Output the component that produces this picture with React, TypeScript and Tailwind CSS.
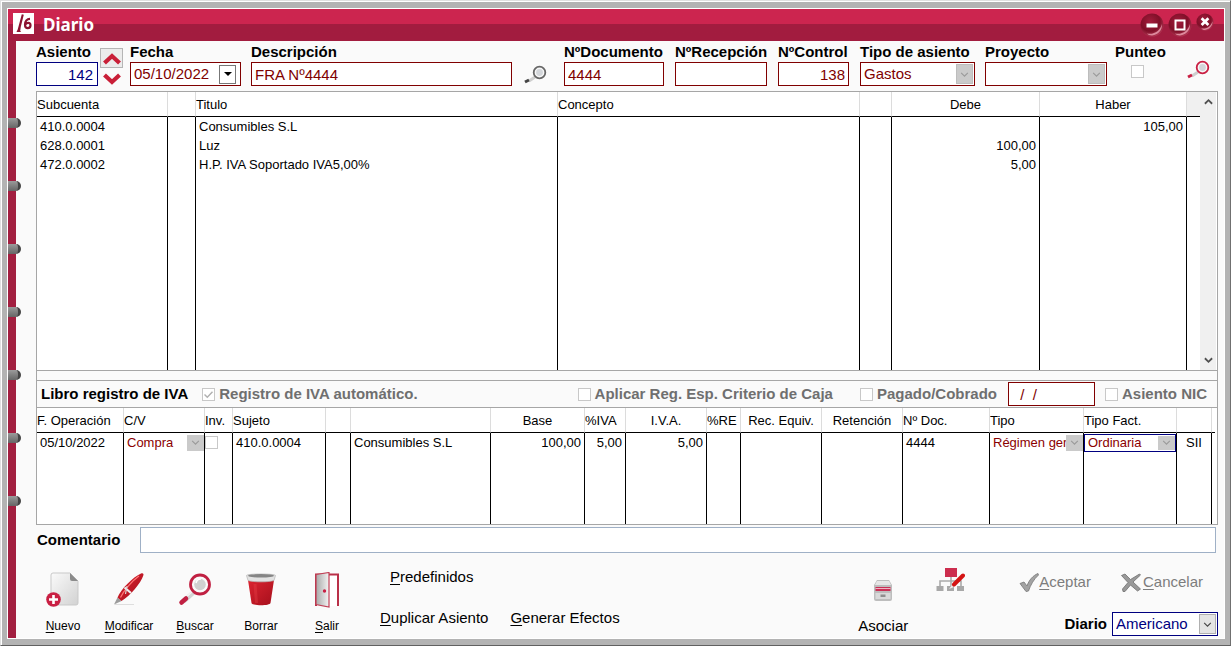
import type { ReactNode } from "react";

const boxBase = "h-6 border border-[#800000] bg-white px-[3px] text-[15px] leading-5 text-[#800000] outline-none";

function Chevron({ className }: { className: string }) {
  return (
    <svg viewBox="0 0 10 6" className={className} fill="none" stroke="currentColor" strokeWidth="1.3" aria-hidden="true">
      <path d="M1 1l4 4 4-4" />
    </svg>
  );
}

function Field({ id, label, className, children }: { id: string; label: string; className: string; children: ReactNode }) {
  return (
    <div className={`flex flex-col ${className}`}>
      <label htmlFor={id} className="h-5 text-[15px] leading-5 font-bold whitespace-nowrap">{label}</label>
      {children}
    </div>
  );
}

function GreySelect({ id, value, label }: { id: string; value: string; label?: string }) {
  return (
    <div className="relative">
      <select id={id} aria-label={label} disabled defaultValue={value} className={`${boxBase} w-full appearance-none opacity-100`}>
        <option value={value}>{value}</option>
      </select>
      <span className="pointer-events-none absolute top-[2px] right-[2px] flex h-5 w-[17px] items-center justify-center border border-[#bdbdbd] bg-[#cacaca] text-[#9a9a9a]">
        <Chevron className="h-[5px] w-[9px]" />
      </span>
    </div>
  );
}

function CellSelect({ label, value, focused }: { label: string; value: string; focused?: boolean }) {
  return (
    <div className={focused ? "relative flex h-[18px] border border-[#000080] bg-white" : "relative flex h-[18px] bg-white"}>
      <select aria-label={label} disabled defaultValue={value} className="w-full appearance-none overflow-hidden bg-transparent pr-4 pl-[3px] text-[13px] leading-4 text-[#8b0000] opacity-100">
        <option value={value}>{value}</option>
      </select>
      <span className="pointer-events-none absolute inset-y-px right-0 flex w-[17px] items-center justify-center bg-[#cacaca] text-[#9a9a9a]">
        <Chevron className="h-[5px] w-[9px]" />
      </span>
    </div>
  );
}

function Check({ id, label, checked }: { id: string; label: string; checked?: boolean }) {
  return (
    <div className="relative flex items-center gap-1">
      <input id={id} type="checkbox" disabled defaultChecked={checked} className="size-[13px] shrink-0 appearance-none border border-[#c8c8c8] bg-white" />
      {checked && (
        <svg viewBox="0 0 13 13" className="pointer-events-none absolute left-0 size-[13px]" fill="none" stroke="#b0b0b0" strokeWidth="1.4" aria-hidden="true">
          <path d="M2.5 6.5l2.8 2.8L10.5 3.8" />
        </svg>
      )}
      <label htmlFor={id} className="text-[15px] leading-5 font-bold whitespace-nowrap text-[#6f6f6f]">{label}</label>
    </div>
  );
}

function Magnifier({ ring, handle, className }: { ring: string; handle: string; className: string }) {
  return (
    <svg viewBox="0 0 34 34" className={className} aria-hidden="true">
      <path d="M16 19l-10 9" stroke="#d4d4d4" strokeWidth="4.5" />
      <path d="M15 18l-8 7" stroke="#f4f4f4" strokeWidth="1.5" />
      <path d="M8 25.500l-4.500 4" stroke={handle} strokeWidth="4.500" strokeLinecap="round" />
      <circle cx="22" cy="11.500" r="9.500" fill="#fafafa" stroke={ring} strokeWidth="2.800" />
      <circle cx="22" cy="11.500" r="5.800" fill="#d0d0d0" />
      <path d="M18 10a5 5 0 0 1 5-4" stroke="#fff" strokeWidth="1.600" fill="none" />
    </svg>
  );
}

function SmallMagnifier({ ring, handle, className }: { ring: string; handle: string; className: string }) {
  return (
    <svg viewBox="0 0 24 20" className={className} aria-hidden="true">
      <path d="M11 12l-6 4" stroke="#cfcfcf" strokeWidth="3" />
      <path d="M5 15l-4 2" stroke={handle} strokeWidth="3" />
      <circle cx="15.500" cy="7.500" r="5.800" fill="#f7f7f7" stroke={ring} strokeWidth="1.800" />
      <circle cx="15.500" cy="7.500" r="3.400" fill="#d3d6da" />
    </svg>
  );
}

function Logo() {
  return (
    <svg viewBox="0 0 21 21" className="size-[21px]" aria-hidden="true">
      <path d="M0 0h21v21H0z" fill="#fff" />
      <path d="M8.800 1.200l2 .5-3 12L7.200 18l1 1H3.500l1.200-2.500z" fill="#8c1230" />
      <path d="M17 5.800c-3 0-5 2.500-5 5.800 0 2 1 3.600 2.700 3.600 1.600 0 2.800-1.200 2.800-2.900 0-1.500-1-2.500-2.300-2.500-1.200 0-2.300.7-2.800 1.800" fill="none" stroke="#8c1230" strokeWidth="2.200" />
    </svg>
  );
}

function WindowButton({ label, size, children }: { label: string; size: string; children: ReactNode }) {
  return (
    <button type="button" aria-label={label} className={size}>
      <svg viewBox="0 0 24 24" className="size-full" aria-hidden="true">
        <circle cx="12" cy="12" r="11.500" fill="url(#knob)" />
        <path d="M22 11c.5 6-4 11-10 11.500-2.500 0-4-.8-5-2 7 1.500 13-2.500 15-9.500z" fill="#f3a9bb" opacity=".75" />
        {children}
      </svg>
    </button>
  );
}

const entryHeads = [
  { t: "Subcuenta", w: "w-[131px] text-left" },
  { t: "", w: "w-[28px]" },
  { t: "Titulo", w: "text-left" },
  { t: "Concepto", w: "w-[302px] text-left" },
  { t: "", w: "w-[32px]" },
  { t: "Debe", w: "w-[148px] text-center" },
  { t: "Haber", w: "w-[147px] text-center" },
];
const entries = [
  ["410.0.0004", "", "Consumibles S.L", "", "", "", "105,00"],
  ["628.0.0001", "", "Luz", "", "", "100,00", ""],
  ["472.0.0002", "", "H.P. IVA Soportado IVA5,00%", "", "", "5,00", ""],
];

const vatHeads = [
  { t: "F. Operación", w: "w-[87px] text-left" },
  { t: "C/V", w: "w-[81px] text-left" },
  { t: "Inv.", w: "w-[28px] text-left" },
  { t: "Sujeto", w: "w-[93px] text-left" },
  { t: "", w: "w-[25px]" },
  { t: "", w: "" },
  { t: "Base", w: "w-[94px] text-center" },
  { t: "%IVA", w: "w-[41px] text-left" },
  { t: "I.V.A.", w: "w-[81px] text-center" },
  { t: "%RE", w: "w-[34px] text-left" },
  { t: "Rec. Equiv.", w: "w-[81px] text-center" },
  { t: "Retención", w: "w-[81px] text-center" },
  { t: "Nº Doc.", w: "w-[87px] text-left" },
  { t: "Tipo", w: "w-[94px] text-left" },
  { t: "Tipo Fact.", w: "w-[93px] text-left" },
  { t: "", w: "w-[35px]" },
];

const th = "h-[25px] overflow-hidden border-r border-b border-r-[#dcdcdc] border-b-black p-0 font-normal whitespace-nowrap";
const td = "border-r border-black px-[3px] py-0 whitespace-nowrap";

function ToolButton({ first, rest, underline = true, children }: { first: string; rest: string; underline?: boolean; children: ReactNode }) {
  return (
    <button type="button" className="flex w-[54px] flex-col items-center gap-2">
      {children}
      <span className="text-[12px] leading-5">
        <span className={underline ? "underline underline-offset-2" : ""}>{first}</span>{rest}
      </span>
    </button>
  );
}

function NewIcon() {
  return (
    <svg viewBox="0 0 34 36" className="h-9 w-[34px]" aria-hidden="true">
      <path d="M7 1h17l8 8v22a2 2 0 0 1-2 2H7a2 2 0 0 1-2-2V3a2 2 0 0 1 2-2z" fill="url(#paper)" stroke="#c9c9c9" />
      <path d="M24 1l8 8h-6a2 2 0 0 1-2-2z" fill="#8b8b8b" />
      <circle cx="7.500" cy="27.500" r="7.300" fill="#c91f43" />
      <path d="M7.500 23v9M3 27.500h9" stroke="#fff" strokeWidth="2.600" />
    </svg>
  );
}

function PenIcon() {
  return (
    <svg viewBox="0 0 34 36" className="h-9 w-[34px]" aria-hidden="true">
      <path d="M3 32.500h19" stroke="#dedede" />
      <path d="M2 32.500l3.500-7 4 3.500z" fill="#9c9c9c" />
      <path d="M5.500 25.500C9 17 21 5 29 1.500c2-.8 3 .3 2.300 2C29 11 18 24 9.500 29z" fill="url(#red)" />
      <path d="M27 4C20 9 12 18 8.500 25.500" stroke="#ff7676" strokeWidth="1.200" fill="none" />
      <path d="M12.500 15.500l6.500 5.500" stroke="#efefef" strokeWidth="2.200" />
      <path d="M15 14l-1.500 8" stroke="#dcdcdc" strokeWidth="1.200" />
    </svg>
  );
}

function TrashIcon() {
  return (
    <svg viewBox="0 0 34 36" className="h-9 w-[34px]" aria-hidden="true">
      <path d="M4 8h26l-3.500 23c-.5 3-18.500 3-19 0z" fill="url(#red)" />
      <path d="M11 12l1.500 19" stroke="#f04a50" strokeWidth="3" opacity=".3" />
      <path d="M2.500 3.500c0-2 29-2 29 0l-1.500 5c-5 1.800-21 1.800-26 0z" fill="#e2e2e2" stroke="#b5b5b5" strokeWidth=".7" />
      <ellipse cx="17" cy="3.800" rx="13" ry="1.800" fill="#858585" />
    </svg>
  );
}

function DoorIcon() {
  return (
    <svg viewBox="0 0 34 36" className="h-9 w-[34px]" aria-hidden="true">
      <path d="M6 34V2.500h22V34" fill="#fff" stroke="#b93048" strokeWidth="2" />
      <path d="M6 2.500l13-2V35L6 32.500z" fill="url(#door)" stroke="#c04056" strokeWidth="1.200" />
      <circle cx="14.500" cy="19" r="1.700" fill="#c91f43" />
    </svg>
  );
}

export default function App() {
  return (
    <div className="bg-white pr-px font-['Liberation_Sans',Arial,sans-serif] text-black">
      <svg className="absolute size-0" aria-hidden="true">
        <defs>
          <radialGradient id="knob" cx=".42" cy=".35" r=".7">
            <stop offset="0" stopColor="#a31c3c" />
            <stop offset=".6" stopColor="#7f0f28" />
            <stop offset="1" stopColor="#b83a58" />
          </radialGradient>
          <linearGradient id="red" x1="0" x2="1" y1="0" y2="1">
            <stop offset="0" stopColor="#dc2430" />
            <stop offset="1" stopColor="#a50f1c" />
          </linearGradient>
          <linearGradient id="paper" x1="0" x2="1" y1="0" y2="1">
            <stop offset="0" stopColor="#fafafa" />
            <stop offset="1" stopColor="#d2d2d2" />
          </linearGradient>
          <linearGradient id="door" x1="0" x2="1">
            <stop offset="0" stopColor="#a8a8a8" />
            <stop offset="1" stopColor="#f4f4f4" />
          </linearGradient>
        </defs>
      </svg>
      <div className="border border-t-[#e0e0e0] border-r-[#707070] border-b-[#606060] border-l-[#e0e0e0]">
        <div className="border-t border-l border-white bg-[#b3b3b3] px-[5px] pt-[6px] pb-[6px]">
          <div className="border border-white bg-[#fafafa]">
            <header className="flex h-8 items-start bg-linear-to-b from-[#cc254f] from-47% to-[#a21c3f] to-47% pt-1 pr-[10px] pl-[5px]">
              <Logo />
              <h1 className="ml-[9px] flex-1 font-['Noto_Sans',sans-serif] text-[17px] leading-6 font-bold text-white">Diario</h1>
              <div className="flex items-start gap-1">
                <WindowButton label="Minimizar" size="size-6">
                  <path d="M6.500 12.500h11" stroke="#fff" strokeWidth="4" />
                </WindowButton>
                <WindowButton label="Maximizar" size="size-6">
                  <path d="M7.500 7.500h9v9h-9z" stroke="#fff" strokeWidth="2" fill="none" />
                </WindowButton>
                <WindowButton label="Cerrar" size="size-[18px]">
                  <path d="M7.500 7l9 9M16.500 7l-9 9" stroke="#fff" strokeWidth="3.600" />
                </WindowButton>
              </div>
            </header>

            <div className="flex">
              <div className="relative z-10 flex w-2 shrink-0 flex-col items-start gap-[53px] bg-[#a21f40] pt-[77px]" aria-hidden="true">
                {[0, 1, 2, 3, 4, 5, 6].map((n) => (
                  <span key={n} className="h-[10px] w-[13px] shrink-0 rounded-r-full border-r-[3px] border-[#444] bg-linear-to-b from-[#9b9b9b] to-[#666]" />
                ))}
              </div>

              <main className="min-w-0 flex-1 pr-[6px] pl-5">
                <div className="flex items-start pt-px pb-[5px]">
                  <Field id="asiento" label="Asiento" className="w-[62px] shrink-0">
                    <input id="asiento" defaultValue="142" className="h-6 w-full border border-[#000080] bg-white px-1 text-right text-[15px] leading-5 text-[#000080] outline-none" />
                  </Field>
                  <div className="mt-[6px] ml-[2px] flex w-[23px] shrink-0 flex-col">
                    <button type="button" aria-label="Asiento anterior" className="flex h-5 items-center justify-center border border-[#b5b5b5] bg-[#ececec]">
                      <svg viewBox="0 0 18 13" className="h-[13px] w-[18px]" fill="none" stroke="#c91f38" strokeWidth="4.200" aria-hidden="true"><path d="M1.500 11L9 4l7.500 7" /></svg>
                    </button>
                    <button type="button" aria-label="Asiento siguiente" className="flex h-[18px] items-end justify-center">
                      <svg viewBox="0 0 18 13" className="h-[13px] w-[18px]" fill="none" stroke="#c91f38" strokeWidth="4.200" aria-hidden="true"><path d="M1.500 2L9 9l7.500-7" /></svg>
                    </button>
                  </div>
                  <Field id="fecha" label="Fecha" className="ml-[7px] w-[111px] shrink-0">
                    <div className="flex h-6 items-center border border-[#800000] bg-white pr-1 pl-[3px]">
                      <input id="fecha" defaultValue="05/10/2022" className="w-0 flex-1 text-[15px] leading-5 text-[#800000] outline-none" />
                      <button type="button" aria-label="Abrir calendario" className="flex h-[19px] w-[17px] items-center justify-center border border-[#777] bg-white">
                        <svg viewBox="0 0 8 4" className="h-1 w-2" aria-hidden="true"><path d="M0 0h8L4 4z" /></svg>
                      </button>
                    </div>
                  </Field>
                  <Field id="descripcion" label="Descripción" className="ml-[10px] min-w-0 flex-1">
                    <input id="descripcion" defaultValue="FRA Nº4444" className={`${boxBase} w-full`} />
                  </Field>
                  <button type="button" aria-label="Buscar descripción" className="mt-[23px] ml-3 w-6 shrink-0">
                    <SmallMagnifier ring="#666" handle="#444" className="h-5 w-6" />
                  </button>
                  <Field id="documento" label="NºDocumento" className="ml-4 w-[100px] shrink-0">
                    <input id="documento" defaultValue="4444" className={`${boxBase} w-full`} />
                  </Field>
                  <Field id="recepcion" label="NºRecepción" className="ml-[11px] w-[92px] shrink-0">
                    <input id="recepcion" defaultValue="" className={`${boxBase} w-full`} />
                  </Field>
                  <Field id="control" label="NºControl" className="ml-[11px] w-[71px] shrink-0">
                    <input id="control" defaultValue="138" className={`${boxBase} w-full text-right`} />
                  </Field>
                  <Field id="tipo" label="Tipo de asiento" className="ml-[11px] w-[115px] shrink-0">
                    <GreySelect id="tipo" value="Gastos" />
                  </Field>
                  <Field id="proyecto" label="Proyecto" className="ml-[10px] w-[122px] shrink-0">
                    <GreySelect id="proyecto" value="" />
                  </Field>
                  <Field id="punteo" label="Punteo" className="ml-2 w-[52px] shrink-0">
                    <input id="punteo" type="checkbox" disabled className="mt-[3px] ml-4 size-[13px] appearance-none border border-[#c8c8c8] bg-white" />
                  </Field>
                  <button type="button" aria-label="Buscar asiento" className="mt-[18px] mr-[7px] ml-5 w-6 shrink-0">
                    <SmallMagnifier ring="#c91f43" handle="#c91f43" className="h-5 w-6" />
                  </button>
                </div>

                <div className="border border-[#a6a6a6]">
                  <div className="flex h-[279px] border-b border-[#a6a6a6] bg-white pr-px">
                    <table className="h-full flex-1 table-fixed border-separate border-spacing-0 text-[13px] leading-[19px]">
                      <thead>
                        <tr>
                          {entryHeads.map((h, i) => (
                            <th key={i} scope="col" className={`${th} ${h.w}`}>{h.t}</th>
                          ))}
                          <th className="w-[13px] border-b border-black bg-[#f0f0f0] p-0" />
                        </tr>
                      </thead>
                      <tbody>
                        {entries.map((row) => (
                          <tr key={row[0]} className="h-[19px]">
                            {row.map((c, i) => (
                              <td key={i} className={`${td} ${i > 4 ? "text-right" : ""}`}>{c}</td>
                            ))}
                            <td className="p-0" />
                          </tr>
                        ))}
                        <tr>
                          {entryHeads.map((_, i) => (
                            <td key={i} className={td} />
                          ))}
                          <td className="p-0" />
                        </tr>
                      </tbody>
                    </table>
                    <div className="flex w-4 shrink-0 flex-col justify-between bg-[#f0f0f0] py-[6px]">
                      <button type="button" aria-label="Subir" className="flex justify-center text-[#505050]">
                        <svg viewBox="0 0 10 7" className="h-[7px] w-[9px]" fill="none" stroke="currentColor" strokeWidth="2" aria-hidden="true"><path d="M1 6l4-4 4 4" /></svg>
                      </button>
                      <button type="button" aria-label="Bajar" className="flex justify-center text-[#505050]">
                        <svg viewBox="0 0 10 7" className="h-[7px] w-[9px]" fill="none" stroke="currentColor" strokeWidth="2" aria-hidden="true"><path d="M1 1l4 4 4-4" /></svg>
                      </button>
                    </div>
                  </div>

                  <div className="h-[10px] border-b border-[#a6a6a6]" />

                  <div className="flex h-[27px] items-center border-b border-[#a6a6a6] pr-[10px] pl-1">
                    <h2 className="mr-[14px] text-[15px] leading-5 font-bold whitespace-nowrap">Libro registro de IVA</h2>
                    <Check id="auto" label="Registro de IVA automático." checked />
                    <div className="ml-auto flex items-center">
                      <Check id="caja" label="Aplicar Reg. Esp. Criterio de Caja" />
                      <div className="ml-[27px]"><Check id="pagado" label="Pagado/Cobrado" /></div>
                      <input aria-label="Fecha de pago" defaultValue="  /  /" className={`${boxBase} mr-[10px] ml-[11px] w-[87px] whitespace-pre`} />
                      <Check id="nic" label="Asiento NIC" />
                    </div>
                  </div>

                  <div className="h-[116px] bg-white pr-[2px]">
                    <table className="h-full w-full table-fixed border-separate border-spacing-0 text-[13px] leading-[19px]">
                      <thead>
                        <tr>
                          {vatHeads.map((h, i) => (
                            <th key={i} scope="col" className={`${th} ${h.w}`}>{h.t}</th>
                          ))}
                          <th className="w-[3px] border-b border-black p-0" />
                        </tr>
                      </thead>
                      <tbody>
                        <tr className="h-[19px]">
                          <td className={td}>05/10/2022</td>
                          <td className="border-r border-black p-0"><CellSelect label="C/V" value="Compra" /></td>
                          <td className="border-r border-black p-0">
                            <input type="checkbox" aria-label="Inv." disabled className="block size-[13px] appearance-none border border-[#c8c8c8] bg-white" />
                          </td>
                          <td className={td}>410.0.0004</td>
                          <td className={td} />
                          <td className={td}>Consumibles S.L</td>
                          <td className={`${td} text-right`}>100,00</td>
                          <td className={`${td} text-right`}>5,00</td>
                          <td className={`${td} text-right`}>5,00</td>
                          <td className={td} />
                          <td className={td} />
                          <td className={td} />
                          <td className={td}>4444</td>
                          <td className="border-r border-black p-0"><CellSelect label="Tipo" value="Régimen general" /></td>
                          <td className="border-r border-black p-0"><CellSelect label="Tipo Fact." value="Ordinaria" focused /></td>
                          <td className={`${td} text-center`}>SII</td>
                          <td className="p-0" />
                        </tr>
                        <tr>
                          {vatHeads.map((_, i) => (
                            <td key={i} className={td} />
                          ))}
                          <td className="p-0" />
                        </tr>
                      </tbody>
                    </table>
                  </div>
                </div>

                <div className="flex items-center pt-[2px] pr-[2px]">
                  <label htmlFor="comentario" className="w-[104px] shrink-0 pl-px text-[15px] leading-5 font-bold">Comentario</label>
                  <input id="comentario" className="h-[26px] min-w-0 flex-1 border border-[#9fb0c6] bg-white px-1 text-[15px] outline-none" />
                </div>

                <footer className="flex h-[85px] items-start">
                  <div className="flex gap-3 pt-[19px]">
                    <ToolButton first="N" rest="uevo"><NewIcon /></ToolButton>
                    <ToolButton first="M" rest="odificar"><PenIcon /></ToolButton>
                    <ToolButton first="B" rest="uscar"><Magnifier ring="#c02042" handle="#c02042" className="h-9 w-[34px]" /></ToolButton>
                    <ToolButton first="B" rest="orrar" underline={false}><TrashIcon /></ToolButton>
                    <ToolButton first="S" rest="alir"><DoorIcon /></ToolButton>
                  </div>
                  <div className="ml-[26px] flex flex-col items-start gap-[21px] pt-[14px] text-[15px] leading-5 whitespace-nowrap">
                    <button type="button" className="ml-[10px]"><span className="underline underline-offset-2">P</span>redefinidos</button>
                    <div className="flex gap-[22px]">
                      <button type="button"><span className="underline underline-offset-2">D</span>uplicar Asiento</button>
                      <button type="button"><span className="underline underline-offset-2">G</span>enerar Efectos</button>
                    </div>
                  </div>

                  <div className="ml-auto flex items-start text-[15px] leading-5">
                    <button type="button" className="flex w-[50px] flex-col items-center gap-[14px] pt-[26px]">
                      <svg viewBox="0 0 20 23" className="h-[23px] w-5" aria-hidden="true">
                        <path d="M4 1h12l3 5v14a2 2 0 0 1-2 2H3a2 2 0 0 1-2-2V6z" fill="#bdbdbd" />
                        <path d="M4 2h12l2 4H2z" fill="#e6e6e6" />
                        <path d="M2.500 8h15v4h-15z" fill="#c92f55" />
                        <path d="M2.500 9.500h15" stroke="#efb3c2" />
                        <path d="M2.500 14h15v6h-15z" fill="#d9d9d9" />
                        <path d="M7.500 15.500h5v2.500h-5z" fill="#8e8e8e" />
                      </svg>
                      <span>Asociar</span>
                    </button>
                    <button type="button" aria-label="Editar esquema" className="mt-[14px] ml-7">
                      <svg viewBox="0 0 29 26" className="h-[26px] w-[29px]" aria-hidden="true">
                        <path d="M9 1h12v9H9z" fill="#cc2d4e" />
                        <path d="M15 10v4M4 19v-5h21v5M15 14v5" stroke="#ababab" strokeWidth="1.600" fill="none" />
                        <path d="M.500 19h7v5h-7zM11 19h7v5h-7zM21 19h7v5h-7z" fill="#a8a8a8" />
                        <path d="M13 22l3-4 2 2z" fill="#eee" />
                        <path d="M18 17.500L27 8.500" stroke="#d41414" strokeWidth="4" strokeLinecap="round" />
                      </svg>
                    </button>
                    <div className="ml-[54px] flex flex-col items-end gap-5 pt-[19px]">
                      <div className="flex gap-[29px] pr-[15px] text-[#7d7d7d]">
                        <button type="button" className="flex items-center">
                          <svg viewBox="0 0 20 19" className="h-[19px] w-5" aria-hidden="true">
                            <path d="M1 10.500l4-1.500 3 4C10 7 14 2.500 19 .500l.500 1.500C15 6 11.500 12 9.500 18L7 18.500z" fill="#a3a3a3" stroke="#777" strokeWidth=".8" />
                          </svg>
                          <span><span className="underline underline-offset-2">A</span>ceptar</span>
                        </button>
                        <button type="button" className="flex items-center">
                          <svg viewBox="0 0 23 19" className="h-[19px] w-[23px]" aria-hidden="true">
                            <path d="M1.500 2.500L5 1l5.500 5.500L19.500 1l1 1-7.500 7 7.500 7-3 2-7-6-5.500 6.500H3L2.500 16 8 9.500z" fill="#999" stroke="#6f6f6f" strokeWidth=".8" />
                          </svg>
                          <span><span className="underline underline-offset-2">C</span>ancelar</span>
                        </button>
                      </div>
                      <div className="flex items-center gap-[5px]">
                        <label htmlFor="diario" className="font-bold">Diario</label>
                        <div className="relative w-[106px]">
                          <select id="diario" defaultValue="Americano" className="h-6 w-full appearance-none border border-[#000080] bg-white px-[3px] text-[15px] leading-5 text-[#000080] outline-none">
                            <option>Americano</option>
                          </select>
                          <span className="pointer-events-none absolute top-[2px] right-[2px] flex h-5 w-[17px] items-center justify-center border border-[#b0b0b0] bg-[#e4e4e4] text-[#444]">
                            <Chevron className="h-[5px] w-[9px]" />
                          </span>
                        </div>
                      </div>
                    </div>
                  </div>
                </footer>
              </main>
            </div>
          </div>
        </div>
      </div>
    </div>
  );
}
